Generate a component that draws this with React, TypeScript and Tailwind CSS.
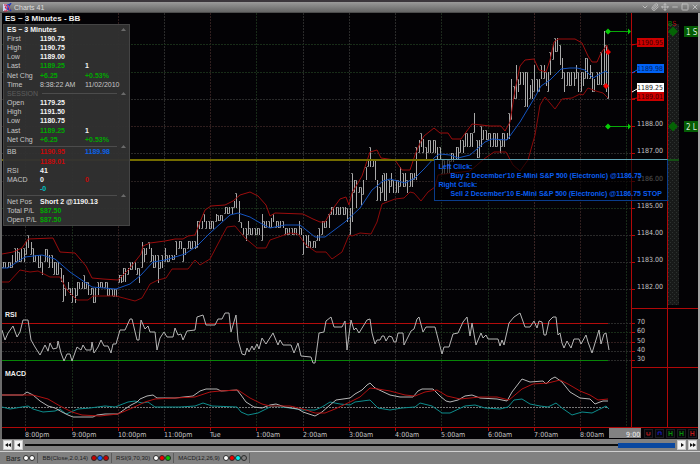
import React from 'react';
import { ChevronDown, Minus, Move, Paperclip, Square, X } from 'lucide-react';

type Bar = [number, number, number];

// each entry is [x, high, low]; it holds until the next entry starts
const barSteps: Bar[] = [
  [2, 262, 268], [10, 255, 268], [14, 248, 262], [17, 252, 262], [21, 248, 262], [25, 241, 255], [28, 235, 248],
  [30, 242, 255], [32, 248, 262], [35, 255, 262], [37, 255, 268], [40, 262, 275], [44, 249, 262], [48, 255, 268],
  [52, 262, 275], [59, 268, 282], [62, 275, 302], [64, 288, 296], [67, 282, 290], [69, 288, 295], [72, 288, 303],
  [76, 282, 296], [78, 282, 289], [83, 275, 289], [85, 282, 289], [88, 282, 295], [90, 288, 295], [93, 288, 303],
  [96, 282, 295], [99, 282, 288], [105, 282, 296], [109, 289, 296], [113, 289, 297], [117, 275, 283], [123, 268, 282],
  [127, 268, 275], [130, 262, 270], [136, 268, 275], [138, 268, 283], [141, 242, 268], [143, 248, 262], [145, 248, 255],
  [148, 242, 249], [150, 248, 262], [153, 255, 268], [157, 255, 283], [159, 262, 269], [161, 255, 268], [163, 248, 262],
  [167, 255, 262], [171, 255, 260], [175, 241, 255], [178, 241, 249], [182, 248, 262], [185, 248, 255], [187, 241, 249],
  [196, 221, 248], [199, 221, 229], [203, 214, 222], [206, 221, 229], [214, 214, 222], [217, 215, 221], [224, 207, 214],
  [233, 201, 208], [235, 193, 208], [238, 201, 222], [239, 222, 228], [241, 228, 235], [244, 228, 241], [247, 221, 235],
  [249, 228, 235], [260, 214, 241], [262, 221, 228], [270, 218, 228], [272, 214, 222], [275, 221, 228], [284, 228, 235],
  [297, 221, 235], [299, 228, 235], [301, 235, 241], [303, 235, 255], [305, 235, 248], [309, 241, 248], [315, 235, 241],
  [318, 228, 241], [321, 221, 235], [324, 221, 228], [327, 214, 228], [329, 207, 215], [346, 208, 222], [348, 208, 235],
  [350, 173, 222], [353, 180, 193], [355, 180, 208], [357, 187, 193], [359, 173, 193], [361, 187, 205], [363, 180, 195],
  [365, 167, 180], [367, 160, 167], [369, 147, 167], [371, 160, 167], [373, 160, 180], [375, 180, 201], [378, 187, 201],
  [380, 175, 193], [382, 173, 187], [384, 173, 201], [387, 180, 193], [389, 173, 187], [393, 180, 193], [399, 167, 187],
  [402, 173, 187], [406, 180, 193], [409, 173, 187], [412, 173, 180], [416, 147, 180], [418, 140, 153], [420, 133, 147],
  [422, 139, 153], [424, 147, 160], [427, 140, 153], [437, 147, 160], [440, 160, 174], [450, 153, 162], [455, 147, 160],
  [459, 140, 153], [463, 133, 147], [473, 113, 133], [475, 133, 147], [476, 140, 158], [480, 126, 147], [482, 130, 140],
  [486, 133, 140], [489, 133, 147], [498, 140, 153], [501, 133, 147], [505, 133, 140], [507, 113, 139], [510, 79, 120],
  [512, 86, 99], [515, 65, 99], [517, 79, 92], [519, 72, 85], [525, 72, 107], [528, 85, 99], [531, 79, 99],
  [533, 65, 92], [536, 79, 92], [539, 72, 85], [541, 65, 79], [544, 72, 86], [547, 72, 92], [549, 52, 75],
  [551, 45, 60], [554, 38, 52], [558, 45, 65], [560, 58, 79], [563, 72, 92], [566, 72, 86], [574, 65, 79],
  [576, 72, 92], [581, 72, 86], [584, 58, 79], [588, 65, 79], [590, 72, 92], [593, 79, 92], [596, 72, 85],
  [599, 45, 79], [601, 52, 85], [603, 31, 85], [605, 45, 92], [608, 52, 99],
];

const makeBars = () => {
  const bars: Bar[] = [];
  let step = 0;
  for (let i = 0; i < 263; i++) {
    const x = 3 + i * 2.31;
    while (step < barSteps.length - 1 && barSteps[step + 1][0] <= x) step++;
    bars.push([Math.round(x), barSteps[step][1], barSteps[step][2]]);
  }
  return bars;
};

const bars = makeBars();

const bandUpper =
  '2,254 13,252 22,248 28,239 53,238 60,252 75,253 86,266 92,278 103,279 118,280 130,268 141,254 143,246 150,243 165,241 175,239 183,239 188,236 195,235 200,222 205,210 211,206 225,205 233,201 240,195 250,192 258,196 266,205 270,216 275,213 303,214 313,219 320,222 325,222 332,210 340,199 346,197 349,205 352,193 362,176 370,152 377,150 381,158 395,160 402,170 410,170 415,155 420,143 424,136 434,128 440,133 448,133 452,139 461,139 472,124 490,126 501,126 505,131 510,122 515,90 520,66 525,60 534,59 539,70 546,72 550,60 554,42 558,39 575,39 582,43 588,56 592,62 597,62 601,53 607,45 608,50';
const bandMid =
  '2,268 8,268 17,262 25,257 42,255 55,259 70,272 92,287 116,289 130,284 141,275 153,262 165,260 185,254 197,246 210,233 230,215 238,213 250,217 262,224 270,228 285,225 300,225 315,237 325,237 345,222 360,208 372,190 383,181 390,179 405,183 415,178 425,168 435,157 440,154 450,155 458,158 470,155 485,142 492,139 507,140 520,122 535,97 541,86 550,80 561,69 570,68 577,68 585,70 593,78 600,74 606,71 608,73';
const bandLower =
  '2,282 9,282 20,270 30,272 38,271 50,277 60,277 67,290 77,300 88,300 93,296 116,296 135,301 142,298 150,284 158,280 166,278 172,269 188,269 195,260 200,265 210,259 220,240 227,227 235,226 245,238 257,248 266,248 270,240 290,233 298,234 306,245 316,252 326,252 332,259 342,252 349,235 352,236 360,233 371,234 377,222 382,204 395,199 404,198 410,192 414,193 421,201 428,192 435,187 438,175 445,174 470,171 484,159 494,152 506,152 513,165 520,171 528,160 535,135 540,105 545,97 555,109 562,99 572,98 580,94 583,95 588,88 596,91 603,93 608,98';
const rsi =
  '2,330 5,340 8,333 13,326 17,337 20,332 23,320 28,320 31,340 35,347 40,355 45,345 48,351 50,343 53,349 57,348 58,341 61,353 64,361 67,354 70,354 72,361 77,347 81,350 83,345 86,350 91,350 92,342 94,353 98,347 101,340 104,346 108,346 111,353 113,344 116,344 120,330 125,330 130,319 132,319 137,340 139,340 141,320 145,329 148,326 150,332 155,332 157,350 160,338 164,332 167,337 173,337 175,328 178,335 181,334 183,340 187,331 195,330 197,317 203,315 206,325 215,325 218,319 222,319 225,313 229,313 231,332 236,315 238,340 242,354 245,355 247,348 249,352 252,346 254,350 257,344 259,349 262,338 266,344 273,333 278,345 280,340 283,345 291,345 294,353 298,343 301,356 311,357 313,363 315,363 319,333 324,332 326,321 331,317 334,327 342,327 345,321 347,350 351,320 354,330 356,328 359,333 367,320 370,319 372,333 375,344 377,340 380,340 382,336 384,336 386,341 389,336 392,337 394,342 396,342 398,333 403,333 404,345 411,331 414,329 417,319 419,317 423,332 426,327 435,327 442,354 444,347 449,347 453,334 458,333 463,322 467,317 470,336 472,323 476,345 481,333 483,338 486,335 488,339 498,339 500,346 502,340 504,345 509,323 514,317 520,313 525,327 530,327 534,321 537,328 539,321 542,322 544,335 546,335 549,321 553,317 556,317 558,335 560,333 562,343 564,348 567,341 571,348 574,339 579,339 581,344 586,335 588,342 592,353 599,330 601,344 604,334 606,333 609,350';
const macd =
  '2,395 23,395 27,392 33,395 40,401 48,406 55,408 62,412 68,415 73,417 93,417 97,415 105,414 118,414 125,409 131,405 137,402 140,399 147,396 153,395 157,398 175,398 193,396 200,391 206,389 217,389 221,391 237,390 241,395 246,402 254,407 262,408 270,405 276,404 285,407 298,409 303,412 315,416 322,412 330,405 336,400 350,398 355,394 362,390 367,385 370,383 375,388 390,395 400,397 413,397 418,391 422,389 433,389 440,396 446,401 450,402 458,400 465,396 472,395 480,398 497,399 507,401 512,392 522,379 530,382 543,381 546,384 551,379 555,377 562,382 570,392 580,398 590,399 595,404 600,402 603,401 608,401';
const macdSignal =
  '2,395 33,395 48,399 60,406 72,412 82,415 100,416 118,414 130,409 145,402 155,399 175,398 195,397 210,392 220,391 238,390 250,398 262,404 270,406 290,406 303,409 315,413 325,413 335,409 350,402 360,397 370,388 378,389 390,391 405,395 415,396 425,392 437,390 447,396 460,399 480,397 497,397 509,400 522,389 533,384 548,383 560,380 568,384 580,391 590,395 598,400 608,399';
const macdDiff =
  '2,407 10,409 22,407 28,406 33,409 43,412 55,411 60,409 66,414 78,409 90,408 105,406 115,407 128,402 135,401 142,403 148,402 155,407 180,407 195,406 203,403 212,406 237,407 241,412 248,415 258,413 272,406 290,408 303,410 315,410 322,407 330,402 340,404 350,405 355,402 370,400 378,408 390,410 402,408 415,407 420,403 432,406 442,413 450,413 465,406 475,405 485,408 500,409 508,407 514,400 522,399 530,404 540,406 548,407 556,403 562,408 572,415 582,412 592,413 600,409 606,406 609,409';

const times = [
  { x: 25, label: '8:00pm', color: '#282828' },
  { x: 72, label: '9:00pm', color: '#182a18' },
  { x: 118, label: '10:00pm', color: '#301e1e' },
  { x: 164, label: '11:00pm', color: '#2a2a2a' },
  { x: 210, label: 'Tue', color: '#301e1e' },
  { x: 256, label: '1:00am', color: '#182a18' },
  { x: 303, label: '2:00am', color: '#2a2a2a' },
  { x: 349, label: '3:00am', color: '#2a2a2a' },
  { x: 395, label: '4:00am', color: '#2a2a2a' },
  { x: 441, label: '5:00am', color: '#1c281c' },
  { x: 488, label: '6:00am', color: '#182a18' },
  { x: 534, label: '7:00am', color: '#3a2424' },
  { x: 580, label: '8:00am', color: '#301e1e' },
  { x: 626, label: '9:00', color: '#182a18' },
];

const prices = [
  { y: 44, label: '', color: '#182c18' },
  { y: 72, label: '', color: '#182c18' },
  { y: 99, label: '', color: '#2a2a2a' },
  { y: 126, label: '1188.00', color: '#301e1e' },
  { y: 153, label: '1187.00', color: '#2a2a2a' },
  { y: 181, label: '1186.00', color: '#282020' },
  { y: 208, label: '1185.00', color: '#182c18' },
  { y: 235, label: '1184.00', color: '#2a2a2a' },
  { y: 262, label: '1183.00', color: '#2a2a2a' },
  { y: 289, label: '1182.00', color: '#2a2a2a' },
];

const rsiLevels = [
  { y: 323, label: '70', color: '#2a2a2a' },
  { y: 332, label: '60', color: '#182c18' },
  { y: 342, label: '50', color: '#301e1e' },
  { y: 351, label: '40', color: '#2a2a2a' },
  { y: 360, label: '30', color: '#2a2a2a' },
];

const tags = [
  { y: 38, label: '1190.95', fill: '#cc0000', color: '#3c0000', from: 45 },
  { y: 64, label: '1189.98', fill: '#0062f5', color: '#00205c', from: 73 },
  { y: 92, label: '1189.01', fill: '#cc0000', color: '#3c0000', from: 99 },
  { y: 83, label: '1189.25', fill: '#ffffff', color: '#222222', from: 92 },
];

const Chart: React.FC = () => (
  <svg viewBox="2 13 696 426" className="block h-auto w-full" role="img" aria-label="ES 3 minute chart">
    <defs>
      <pattern id="noise" width="4" height="4" patternUnits="userSpaceOnUse">
        <rect width="4" height="4" fill="#181a19" />
        <rect width="1" height="1" fill="#2e3230" />
        <rect x="2" y="2" width="1" height="1" fill="#2e3230" />
      </pattern>
    </defs>
    <rect x="2" y="13" width="696" height="426" fill="#030205" />

    {/* grid */}
    <g strokeDasharray="2 1" shapeRendering="crispEdges">
      {times.map((t) => (
        <line key={t.x} x1={t.x + 0.5} x2={t.x + 0.5} y1="13" y2="427" stroke={t.color} />
      ))}
      {[...prices, ...rsiLevels].map((p) => (
        <line key={p.y} x1="2" x2="631" y1={p.y + 0.5} y2={p.y + 0.5} stroke={p.color} />
      ))}
      <line x1="2" x2="608" y1="407.5" y2="407.5" stroke="#777777" />
    </g>

    {/* price bars */}
    <g shapeRendering="crispEdges">
      {bars.map(([x, high, low], i) => (
        <g key={i}>
          <rect x={x} y={high} width="1" height={low - high} fill="#a8a8a8" />
          <rect x={x - 1} y={i % 2 ? high : low - 1} width="2" height="1" fill="#747474" />
        </g>
      ))}
    </g>
    <g fill="none" strokeLinejoin="round">
      <polyline points={bandUpper} stroke="#9c0d0d" />
      <polyline points={bandLower} stroke="#8c0a0a" />
      <polyline points={bandMid} stroke="#1454c0" />
    </g>

    {/* RSI and MACD */}
    <g shapeRendering="crispEdges">
      <rect x="2" y="323" width="606" height="1" fill="#b40c0c" />
      <rect x="2" y="360" width="606" height="1" fill="#078507" />
    </g>
    <g fill="none" strokeLinejoin="round">
      <polyline points={rsi} stroke="#b5b5b5" />
      <polyline points={macdDiff} stroke="#0d8c8c" />
      <polyline points={macd} stroke="#b5b5b5" />
      <polyline points={macdSignal} stroke="#b01010" />
    </g>

    {/* cursor line */}
    <g shapeRendering="crispEdges">
      <rect x="2" y="159" width="432" height="2" fill="#746c00" />
      <rect x="667" y="159" width="12" height="2" fill="#145014" />
    </g>

    {/* pane borders */}
    <g fill="#b00808" shapeRendering="crispEdges">
      <rect x="631" y="13" width="1" height="414" />
      <rect x="667" y="13" width="1" height="414" />
      <rect x="631" y="308" width="67" height="1" />
      <rect x="631" y="367" width="67" height="1" />
      <rect x="2" y="427" width="696" height="1" />
      {times.map((t) => (
        <rect key={t.x} x={t.x} y="427" width="1" height="4" />
      ))}
      {[...prices, ...rsiLevels].map((p) => (
        <rect key={p.y} x="631" y={p.y} width="4" height="1" />
      ))}
    </g>

    {/* order column */}
    <rect x="668" y="24" width="11" height="135" fill="url(#noise)" />
    <rect x="668" y="161" width="11" height="144" fill="url(#noise)" />
    <g fontFamily="DejaVu Sans Condensed, Liberation Sans, sans-serif" fontSize="7">
      <text x="668" y="26" fill="#0a8c0a">
        B<tspan fill="#b01010">S</tspan>
      </text>
      {[31.5, 126.5].map((y, i) => (
        <g key={y}>
          <path d={`M673 ${y - 5}l5 5-5 5-5-5z`} fill="#056405" />
          <rect x="684" y={y - 5.5} width="14" height="11" fill="#045c04" />
          <text x="686" y={y + 3} fill="#d8e8d8" fontSize="8">
            {i === 0 ? '1 S' : '2 L'}
          </text>
          <path d={`M608 ${y}H630`} stroke="#08a808" />
          <path d={`M608 ${y - 3}l3 3-3 3-3-3zM628 ${y - 3}l3 3-3 3z`} fill="#06cc06" />
        </g>
      ))}
      <path d="M608 49l3 3-3 3-3-3zM606 83l3 3-3 3-3-3z" fill="#fa0000" />

      {/* axis labels */}
      <g fill="#c4c4c4">
        {prices.map((p) => (
          <text key={p.y} x="637" y={p.y}>
            {p.label}
          </text>
        ))}
        {rsiLevels.map((p) => (
          <text key={p.y} x="637" y={p.y + 1}>
            {p.label}
          </text>
        ))}
        <rect x="609" y="428" width="32" height="10" fill="#828282" />
        {times.map((t) => (
          <text key={t.x} x={t.x} y="437" fill={t.label === '9:00' ? '#f0f0f0' : '#c4c4c4'}>
            {t.label}
          </text>
        ))}
      </g>
      {tags.map((t) => (
        <g key={t.label}>
          <path d={`M632 ${t.from}L637 ${t.y + 6}`} stroke={t.fill} />
          <rect x="637" y={t.y} width="27" height="9" fill={t.fill} />
          <text x="637" y={t.y + 7} fill={t.color}>
            {t.label}
          </text>
        </g>
      ))}
    </g>
    <g fontFamily="Liberation Sans, Arial, sans-serif" fontWeight="700" fill="#eeeeee">
      <text x="5" y="21" fontSize="8">ES ~ 3 Minutes - BB</text>
      <text x="5" y="317" fontSize="7">RSI</text>
      <text x="5" y="376" fontSize="7">MACD</text>
    </g>
  </svg>
);

type Row = { label: string; a?: string; b?: string; ca?: string; cb?: string; plain?: boolean };

const green = 'text-[#00a800]';
const red = 'text-[#c80808]';

const quoteRows: Row[] = [
  { label: 'First', a: '1190.75' },
  { label: 'High', a: '1190.75' },
  { label: 'Low', a: '1189.00' },
  { label: 'Last', a: '1189.25', ca: green, b: '1' },
  { label: 'Net Chg', a: '+6.25', ca: green, b: '+0.53%', cb: green },
  { label: 'Time', a: '8:38:22 AM', b: '11/02/2010', plain: true },
];
const sessionRows: Row[] = [
  { label: 'Open', a: '1179.25' },
  { label: 'High', a: '1191.50' },
  { label: 'Low', a: '1180.75' },
  { label: 'Last', a: '1189.25', ca: green, b: '1' },
  { label: 'Net Chg', a: '+6.25', ca: green, b: '+0.53%', cb: green },
];
const studyRows: Row[] = [
  { label: 'BB', a: '1190.95', ca: red, b: '1189.98', cb: 'text-[#0a62ea]' },
  { label: '', a: '1189.01', ca: red },
  { label: 'RSI', a: '41' },
  { label: 'MACD', a: '0', b: '0', cb: red },
  { label: '', a: '-0', ca: 'text-[#00c4c4]' },
];
const positionRows: Row[] = [
  { label: 'Net Pos', a: 'Short 2 @1190.13' },
  { label: 'Total P/L', a: '$87.50', ca: green },
  { label: 'Open P/L', a: '$87.50', ca: green },
];

const Collapse: React.FC<{ label: string }> = ({ label }) => (
  <button aria-label={label} className="block shrink-0">
    <svg viewBox="0 0 5 3" className="h-[3px] w-[5px]">
      <path d="M0 3L2.5 0L5 3z" fill="#6a6a6a" />
    </svg>
  </button>
);

const Rows: React.FC<{ rows: Row[] }> = ({ rows }) => (
  <>
    {rows.map((r, i) => (
      <tr key={i}>
        <th className="text-left font-normal text-[#c6c6c6]">{r.label}</th>
        <td colSpan={r.b ? 1 : 2} className={`${r.plain ? 'text-[#c6c6c6]' : 'font-bold'} ${r.ca || ''}`}>
          {r.a}
        </td>
        {r.b && <td className={`${r.plain ? 'text-[#c6c6c6]' : 'font-bold'} ${r.cb || ''}`}>{r.b}</td>}
      </tr>
    ))}
  </>
);

const Divider: React.FC<{ title?: string }> = ({ title }) => (
  <tr>
    <td colSpan={3}>
      <div className="flex items-center gap-1 pr-[3px] text-[#5e5e5e]">
        {title}
        <span className="h-px flex-1 bg-[#4c4c4c]" />
        <Collapse label="Collapse section" />
      </div>
    </td>
  </tr>
);

const DataWindow: React.FC = () => (
  <div className="absolute left-px top-[11px] w-[127px] border border-[#444] bg-[#323232]/95 pl-[3px] text-[7px] leading-[8px] text-[#f4f4f4]">
    <table className="h-[200px] w-full table-fixed border-collapse whitespace-nowrap [&_td]:p-0 [&_th]:p-0">
      <colgroup>
        <col className="w-[33px]" />
        <col className="w-[45px]" />
        <col />
      </colgroup>
      <tbody>
        <tr>
          <td colSpan={3}>
            <div className="flex items-center justify-between pr-[3px] font-bold">
              ES ~ 3 Minutes
              <Collapse label="Collapse window" />
            </div>
          </td>
        </tr>
        <Rows rows={quoteRows} />
        <Divider title="SESSION" />
        <Rows rows={sessionRows} />
        <Divider />
        <Rows rows={studyRows} />
        <Divider />
        <Rows rows={positionRows} />
      </tbody>
    </table>
  </div>
);

const OrderTip: React.FC = () => (
  <div className="absolute left-[62%] top-[146px] whitespace-nowrap border border-[#0a3c8a] border-t-[#5fa3b4] bg-black/60 py-[2px] pl-[4px] pr-[5px] text-[7px] font-bold leading-[9px] text-[#0a5ef0]">
    <p>Left Click:</p>
    <p className="pl-3">Buy 2 December'10 E-Mini S&amp;P 500 (Electronic) @1186.75</p>
    <p>Right Click:</p>
    <p className="pl-3">Sell 2 December'10 E-Mini S&amp;P 500 (Electronic) @1186.75 STOP</p>
  </div>
);

const chartTools = [
  { name: 'Undo', color: 'text-[#c01818]', d: 'M1 1v3h3V1' },
  { name: 'Range', color: 'text-[#1818c8]', d: 'M1 4V1h3v3' },
  { name: 'Narrow', color: 'text-[#089008]', d: 'M1 0v5M4 0v5M1 2.5h3' },
  { name: 'Widen', color: 'text-[#089008]', d: 'M1 0v5M4 0v5M1 2.5h3' },
  { name: 'Reset', color: 'text-[#c01818]', d: 'M1 0v5M4 0v5M1 2.5h3' },
];

const ChartTools: React.FC = () => (
  <div className="absolute bottom-px right-px flex gap-[2px]">
    {chartTools.map((t) => (
      <button
        key={t.name}
        aria-label={t.name}
        className={`flex h-[9px] w-[9px] items-center justify-center border border-[#1c1c22] bg-[#07070b] ${t.color}`}
      >
        <svg viewBox="0 0 5 5" className="h-[5px] w-[5px]">
          <path d={t.d} fill="none" stroke="currentColor" />
        </svg>
      </button>
    ))}
  </div>
);

const windowButtons = [
  { name: 'Menu', Icon: ChevronDown },
  { name: 'Attach', Icon: Paperclip },
  { name: 'Move', Icon: Move },
  { name: 'Minimize', Icon: Minus },
  { name: 'Maximize', Icon: Square },
  { name: 'Close', Icon: X },
];

const TitleBar: React.FC = () => (
  <header className="flex h-[13px] items-center border-b border-t-2 border-b-[#4c4c4c] border-t-[#3b363c] bg-linear-to-b from-[#9a9a9a] to-[#666] pl-[3px] pr-px text-[8px] leading-[9px] text-[#dedede]">
    <svg viewBox="0 0 9 9" className="mr-[2px] h-[9px] w-[9px]">
      <path d="M0 1h5v7H0z" fill="#c8d4f4" />
      <path d="M1 2h3L2 5h2v3H1" fill="none" stroke="#d01838" />
      <path d="M5 1v6M8 0L5 4l3 4" fill="none" stroke="#2038c0" strokeWidth="1.5" />
      <path d="M5 2l2 5" stroke="#e04060" />
    </svg>
    <h1 className="flex-1 text-[7px]">Charts 41</h1>
    <div className="flex gap-[2px] text-[#bcbcbc]">
      {windowButtons.map(({ name, Icon }) => (
        <button key={name} aria-label={name}>
          <Icon size={8} strokeWidth={3} />
        </button>
      ))}
    </div>
  </header>
);

const ScrollButton: React.FC<{ label: string; d: string }> = ({ label, d }) => (
  <button aria-label={label} className="flex h-[10px] w-[9px] items-center justify-center border border-[#c8c8c8] bg-[#f2f2f2]">
    <svg viewBox="0 0 6 4" className="h-1 w-[6px]">
      <path d={d} fill="#111" />
    </svg>
  </button>
);

const ScrollBar: React.FC = () => (
  <nav aria-label="Time scroll" className="flex h-[12px] items-center gap-[2px] bg-[#818181] px-[3px]">
    <ScrollButton label="First" d="M3 0v4L0 2zM6 0v4L3 2z" />
    <ScrollButton label="Back" d="M4 0v4L1 2z" />
    <div className="flex h-[5px] flex-1 items-center">
      <div className="h-[2px] flex-1 bg-[#0c0c0c]" />
      <div className="h-[5px] w-[57px] bg-[#0a48a0]" />
    </div>
    <ScrollButton label="Forward" d="M2 0v4l3-2z" />
    <ScrollButton label="Last" d="M0 0v4l3-2zM3 0v4l3-2z" />
  </nav>
);

const studies = [
  { name: 'BB(Close,2.0,14)', dots: ['bg-[#c80000]', 'bg-[#0a62ff]', 'bg-[#c80000]'] },
  { name: 'RSI(9,70,30)', dots: ['bg-white', 'bg-[#f00000]', 'bg-[#00c400]'] },
  { name: 'MACD(12,26,9)', dots: ['bg-white', 'bg-[#f00000]', 'bg-[#00f0f0]', 'bg-[#808080]'] },
];

const Study: React.FC<{ name: string; dots: string[]; size: string }> = ({ name, dots, size }) => (
  <button className={`flex h-[10px] items-center gap-[3px] border-r border-[#5c5c5c] pl-1 pr-[2px] ${size}`}>
    {name}
    <span className="flex">
      {dots.map((dot, i) => (
        <span key={i} className={`h-[6px] w-[6px] rounded-full border border-[#2a2a2a] ${dot}`} />
      ))}
    </span>
  </button>
);

const StudyBar: React.FC = () => (
  <footer className="flex h-[13px] items-center border-t border-[#d0d0d0] bg-[#818181] pl-[2px] leading-[9px] text-[#1c1c1c]">
    <Study name="Bars" dots={['bg-white', 'bg-white']} size="text-[7px]" />
    {studies.map((s) => (
      <Study key={s.name} name={s.name} dots={s.dots} size="text-[6px]" />
    ))}
  </footer>
);

const App: React.FC = () => (
  <div className="w-full overflow-hidden bg-[#818181] font-['Liberation_Sans',Arial,sans-serif]">
    <TitleBar />
    <main className="relative border-l-2 border-r-2 border-l-[#6c6c6c] border-r-[#a4a4a4]">
      <Chart />
      <DataWindow />
      <OrderTip />
      <ChartTools />
    </main>
    <ScrollBar />
    <StudyBar />
  </div>
);

export default App;
